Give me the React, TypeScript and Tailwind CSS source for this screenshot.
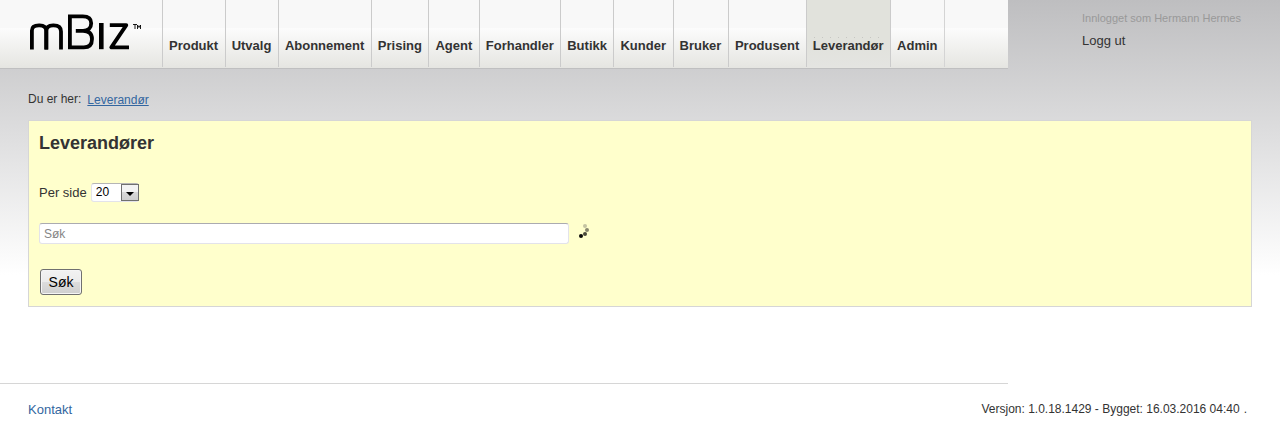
const navItems = [
  'Produkt',
  'Utvalg',
  'Abonnement',
  'Prising',
  'Agent',
  'Forhandler',
  'Butikk',
  'Kunder',
  'Bruker',
  'Produsent',
  'Leverandør',
  'Admin',
];

function Logo() {
  return (
    <svg width="112" height="38" viewBox="0 0 112 38" fill="none" stroke="#000" role="img" aria-label="mBiz">
      <g strokeWidth="3.8">
        <path d="M1.9 36.500V17.500C1.900 13.800 4.500 12.300 9 12.300h.5c4.600 0 6.800 1.600 6.800 6v18.200" />
        <path d="M16.300 36.500V18.300c0-4.400 2.200-6 6.800-6h.5c4.800 0 7.400 1.600 7.400 6.200v18" />
        <path d="M39.900 36.200V3.300h12.900c5.200 0 8.400 2.100 8.400 6.900 0 4.800-3 7.600-8.200 7.600h-7.200M53 17.800c6.400 0 9 2.800 9 8.100 0 5.500-2.600 8.400-8.200 8.400H39.900" />
        <path d="M79.800 12.100h16.500L81.300 34.400h17.700" strokeLinejoin="round" />
      </g>
      <path d="M71.300 10v26.200" strokeWidth="4.6" />
      <path d="M103 11.500h4M105 11.500v4.500M107.500 16v-4l1.500 2.500 1.500-2.500v4" strokeWidth="0.9" />
    </svg>
  );
}

function Spinner() {
  return (
    <svg width="12" height="16" viewBox="0 0 12 16" role="img" aria-label="Laster">
      <circle cx="7" cy="3" r="2" fill="#c5c4a2" />
      <circle cx="9" cy="7" r="2" fill="#88876e" />
      <circle cx="7" cy="11" r="2" fill="#494839" />
      <circle cx="3" cy="13" r="2" fill="#0a0a08" />
    </svg>
  );
}

function Header() {
  return (
    <header className="flex items-start">
      <div className="flex grow border-b border-[#bfbfc0] bg-[linear-gradient(#f8f8f8_0,#f8f8f8_28px,#fcfcfc_28px,#e5e5e1_68px)]">
        <a href="#" className="w-[162px] shrink-0 pt-[13px] pl-[30px]">
          <Logo />
        </a>
        <nav className="mb-px flex min-w-[783px] border-r border-[#d4d4d4]">
          {navItems.map((item) => (
            <a
              key={item}
              href="#"
              aria-current={item === 'Leverandør' ? 'page' : undefined}
              className="relative h-[67px] grow border-l border-[#cbcbcb] px-[6px] pt-[37px] text-[13px] leading-[18px] font-bold whitespace-nowrap text-[#333] aria-[current=page]:bg-[linear-gradient(#e1e2dc,#e1e2dc_40px,#e4e4e1)]"
            >
              {item === 'Leverandør' && (
                <span className="absolute top-[37px] right-[5px] left-[7px] h-px bg-[repeating-linear-gradient(90deg,#c6c6c2_0_1px,transparent_1px_8px)]" />
              )}
              {item}
            </a>
          ))}
        </nav>
      </div>
      <div className="w-[272px] shrink-0 pt-[10px] pl-[74px]">
        <p className="text-[11px] leading-4 text-[#999]">Innlogget som Hermann Hermes</p>
        <a href="#" className="mt-[6px] block text-[13px] leading-[18px]">
          Logg ut
        </a>
      </div>
    </header>
  );
}

export default function App() {
  return (
    <div className="bg-[linear-gradient(#bebec0,#fff_275px)] bg-white font-['Liberation_Sans',Arial,sans-serif] text-[#333]">
      <Header />
      <main className="px-7 pt-[22px]">
        <div className="flex gap-[6px] text-xs leading-4">
          <span>Du er her:</span>
          <a href="#" className="mt-px text-[#3366a0] underline">
            Leverandør
          </a>
        </div>
        <section className="mt-3 border border-[#d6d6d6] bg-[#ffffcc] px-[10px] pt-[10px] pb-[11px]">
          <h1 className="text-[18px] leading-6 font-bold">Leverandører</h1>
          <form onSubmit={(e) => e.preventDefault()}>
            <div className="mt-7 flex items-center gap-1 text-[13px] leading-[18px]">
              <label htmlFor="per-page">Per side</label>
              <div className="relative">
                <select
                  id="per-page"
                  defaultValue="20"
                  className="block h-[19px] w-12 appearance-none rounded-[3px] border border-[#e3e3ea] border-t-[#b5b5b5] bg-white pb-[2px] pl-1 text-xs leading-4 text-black"
                >
                  <option>10</option>
                  <option>20</option>
                  <option>50</option>
                </select>
                <span className="pointer-events-none absolute top-px right-0 flex h-[17px] w-[18px] items-center justify-center border border-[#707070] bg-[linear-gradient(#f3f3f3_50%,#d8d8d8_50%,#cfcfcf)]">
                  <svg width="8" height="4" viewBox="0 0 8 4" className="mt-[2px]" aria-hidden="true">
                    <path d="M0 0h8L4 4z" fill="#000" />
                  </svg>
                </span>
              </div>
            </div>
            <div className="mt-[21px] flex items-start gap-[9px]">
              <input
                type="text"
                aria-label="Søk"
                placeholder="Søk"
                className="h-[21px] w-[530px] rounded-[3px] border border-[#e3e3ea] border-t-[#ababb0] bg-white px-1 text-xs placeholder:text-[#858585]"
              />
              <Spinner />
            </div>
            <button
              type="submit"
              className="mt-[25px] ml-px block h-[26px] w-[42px] rounded-[3px] border border-[#707070] bg-[linear-gradient(#f2f2f2,#ebebeb_50%,#dddddd_50%,#cfcfcf)] text-[14px] leading-6 text-black shadow-[inset_0_0_0_1px_#f5f5f5]"
            >
              Søk
            </button>
          </form>
        </section>
      </main>
      <footer className="mt-[76px]">
        <hr className="mr-[272px] border-[#d6d6d6]" />
        <div className="flex justify-between pt-4 pr-[33px] pb-[14px] pl-7">
          <a href="#" className="text-[13px] leading-5 text-[#3366a0]">
            Kontakt
          </a>
          <p className="flex gap-1 text-xs leading-[18px]">
            <span>Versjon: 1.0.18.1429 - Bygget: 16.03.2016 04:40</span>
            <span>.</span>
          </p>
        </div>
      </footer>
    </div>
  );
}
